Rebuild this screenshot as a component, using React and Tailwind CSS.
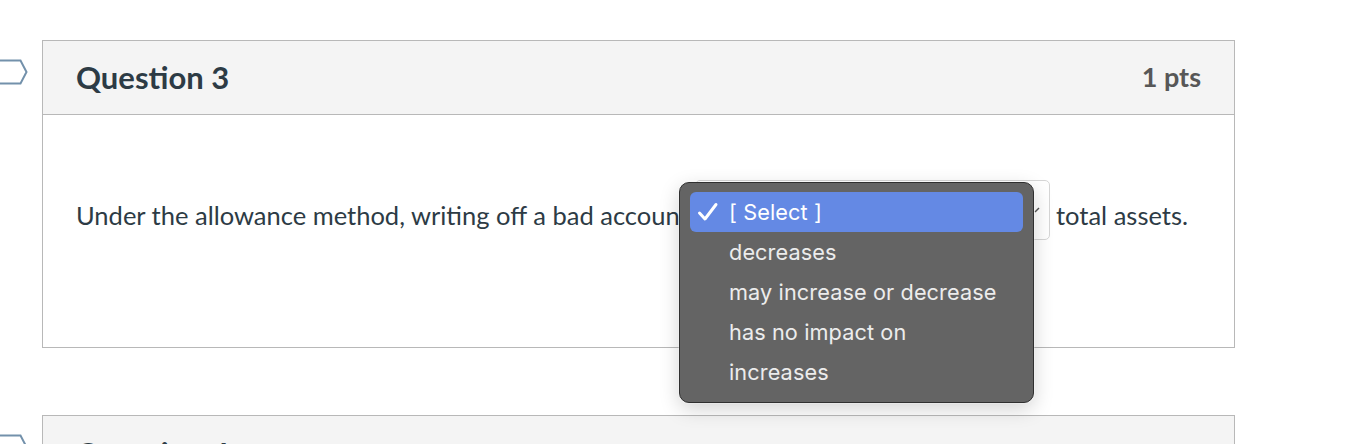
import React from "react";

function Marker() {
  return (
    <svg width="30" height="26" viewBox="0 0 30 26" className="block">
      <polygon points="-10,1.5 20.5,1.5 26.5,13 20.5,24.5 -10,24.5" fill="#ffffff" stroke="#7391ab" strokeWidth="2" />
    </svg>
  );
}

const options = ["decreases", "may increase or decrease", "has no impact on", "increases"];

export default function App() {
  return (
    <div className="w-[1352px] h-[444px] overflow-hidden bg-white" style={{ fontFamily: "Lato, 'Liberation Sans', sans-serif" }}>
      <div className="flex flex-col pt-[40px] gap-[67px]">
        <div className="flex items-start">
          <div className="w-[42px] pt-[19px]"><Marker /></div>
          <div className="w-[1193px] border border-[#b8b8b8]">
            <div className="h-[74px] bg-[#f4f4f4] border-b border-[#b8b8b8] flex items-center justify-between pl-[33px] pr-[33px]">
              <span className="text-[31px] font-bold text-[#2d3b45]">Question 3</span>
              <span className="text-[27px] font-bold text-[#575757]">1 pts</span>
            </div>
            <div className="h-[232px] pl-[33px] pr-[46px] pt-[65px]">
              <div className="relative flex items-center text-[25.5px] text-[#2d3b45]">
                <span className="whitespace-nowrap mt-[10px]">Under the allowance method, writing off a bad account</span>
                <div className="ml-[6px] flex-1 h-[60px] border border-[#d6d6d6] rounded-[5px] bg-white flex items-center justify-between pl-3 pr-[6px]">
                  <span className="whitespace-nowrap">[ Select ]</span>
                  <svg width="10" height="8" viewBox="0 0 10 8"><path d="M2 6 L6 2" stroke="#555" strokeWidth="1.5" fill="none" /></svg>
                </div>
                <span className="ml-[6px] whitespace-nowrap mt-[10px]">total assets.</span>
                <div
                  className="absolute left-[603px] top-[2px] w-[355px] h-[221px] rounded-[10px] bg-[#646464] border border-[#2f2f2f] shadow-[0_0_0_1px_rgba(255,255,255,0.25),0_6px_20px_rgba(0,0,0,0.18)] px-[10px] pt-[9px] z-10"
                  style={{ fontFamily: "Inter, 'Liberation Sans', sans-serif" }}
                >
                  <div className="h-[40px] rounded-[6px] bg-[#6489e4] flex items-center text-white text-[21.7px] tracking-[0.1px]">
                    <svg width="22" height="20" viewBox="0 0 22 20" className="ml-[7px] mr-[10px]">
                      <path d="M2.5 11 L8 17 L19 2.5" stroke="#ffffff" strokeWidth="3" fill="none" strokeLinecap="round" strokeLinejoin="round" />
                    </svg>
                    <span>[ Select ]</span>
                  </div>
                  {options.map((o) => (
                    <div key={o} className="h-[40px] flex items-center pl-[39px] text-[#ececec] text-[21.7px] tracking-[0.1px]">
                      {o}
                    </div>
                  ))}
                </div>
              </div>
            </div>
          </div>
        </div>
        <div className="flex items-start">
          <div className="w-[42px] pt-[19px]"><Marker /></div>
          <div className="w-[1193px] border border-[#b8b8b8]">
            <div className="h-[74px] bg-[#f4f4f4] flex items-center pl-[33px]">
              <span className="text-[31px] font-bold text-[#2d3b45]">Question 4</span>
            </div>
          </div>
        </div>
      </div>
    </div>
  );
}
